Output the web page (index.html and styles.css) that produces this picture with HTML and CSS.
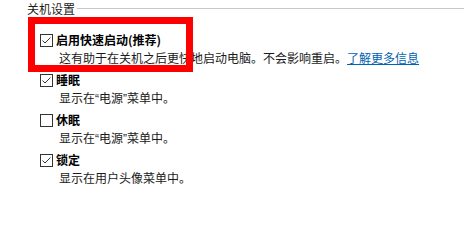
FILE: index.html
```html
<!DOCTYPE html>
<html lang="zh-CN">
<head>
<meta charset="utf-8">
<link rel="stylesheet" href="styles.css">
</head>
<body>
<div class="panel">
  <div class="heading"><span class="heading-text">关机设置</span><span class="rule"></span></div>
  <div class="items">
    <div class="item">
      <div class="row">
        <span class="box"><svg viewBox="0 0 11 11" width="11" height="11"><path d="M1.5 5.5 L4 8 L9.5 2.5" fill="none" stroke="#333" stroke-width="1"/></svg></span>
        <span class="label">启用快速启动(推荐)</span>
      </div>
      <div class="desc">这有助于在关机之后更快地启动电脑。不会影响重启。<a class="link" href="#">了解更多信息</a></div>
    </div>
    <div class="item">
      <div class="row">
        <span class="box"><svg viewBox="0 0 11 11" width="11" height="11"><path d="M1.5 5.5 L4 8 L9.5 2.5" fill="none" stroke="#333" stroke-width="1"/></svg></span>
        <span class="label">睡眠</span>
      </div>
      <div class="desc">显示在<span class="q">“</span>电源<span class="q">”</span>菜单中。</div>
    </div>
    <div class="item">
      <div class="row">
        <span class="box"></span>
        <span class="label">休眠</span>
      </div>
      <div class="desc">显示在<span class="q">“</span>电源<span class="q">”</span>菜单中。</div>
    </div>
    <div class="item">
      <div class="row">
        <span class="box"><svg viewBox="0 0 11 11" width="11" height="11"><path d="M1.5 5.5 L4 8 L9.5 2.5" fill="none" stroke="#333" stroke-width="1"/></svg></span>
        <span class="label">锁定</span>
      </div>
      <div class="desc">显示在用户头像菜单中。</div>
    </div>
  </div>
  <div class="highlight"></div>
</div>
</body>
</html>
```
FILE: styles.css
```css
html, body {
  margin: 0;
  padding: 0;
  background: #fff;
}
.panel {
  position: relative;
  width: 465px;
  height: 200px;
  font-family: "Noto Sans CJK SC", "Noto Sans", sans-serif;
  font-size: 12px;
  color: #000;
}
.heading {
  display: flex;
  align-items: center;
  gap: 2px;
  height: 17px;
  padding-left: 27px;
  padding-right: 1px;
}
.heading-text {
  line-height: 17px;
  color: #1a1a1a;
}
.rule {
  flex: 1;
  height: 1px;
  background: #c8c8c8;
}
.items {
  margin-top: 14px;
  padding-left: 40px;
  display: flex;
  flex-direction: column;
  gap: 4px;
}
.row {
  display: flex;
  align-items: center;
  height: 18px;
}
.box {
  width: 11px;
  height: 11px;
  border: 1px solid #333;
  display: flex;
  align-items: center;
  justify-content: center;
  background: #fff;
}
.box svg {
  display: block;
}
.label {
  margin-left: 3px;
  font-weight: bold;
  line-height: 18px;
}
.desc {
  padding-left: 19px;
  height: 18px;
  line-height: 18px;
  color: #1a1a1a;
  white-space: nowrap;
}
.q {
  font-family: "Liberation Sans", sans-serif;
}
.link {
  color: #0063b1;
  text-decoration: underline;
}
.highlight {
  position: absolute;
  left: 28px;
  top: 17px;
  width: 165px;
  height: 55px;
  box-sizing: border-box;
  border: 7px solid #f00;
}
```
